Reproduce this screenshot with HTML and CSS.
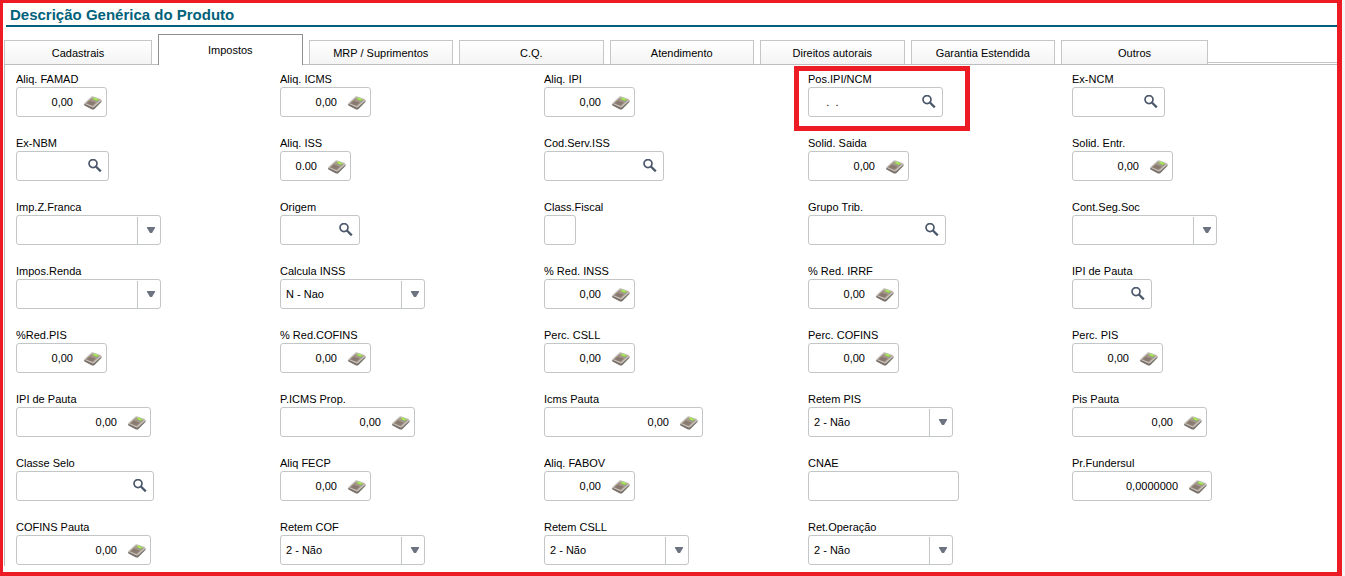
FILE: index.html
```
<!DOCTYPE html>
<html lang="pt-BR">
<head>
    <meta charset="UTF-8">
    <meta name="viewport" content="width=device-width, initial-scale=1.0">
    <title>Descrição Genérica do Produto</title>
    <link rel="stylesheet" href="styles.css">
</head>
<body>
    <main class="frame">
        <h1>Descrição Genérica do Produto</h1>

        <div class="tabbar">
            <nav class="tabs">
                <button class="tab first">Cadastrais</button>
                <button class="tab active">Impostos</button>
                <button class="tab">MRP / Suprimentos</button>
                <button class="tab">C.Q.</button>
                <button class="tab">Atendimento</button>
                <button class="tab">Direitos autorais</button>
                <button class="tab">Garantia Estendida</button>
                <button class="tab last">Outros</button>
            </nav>
            <div class="tabs-rest"></div>
        </div>

        <form class="panel" id="fields"></form>
    </main>

    <svg width="0" height="0" class="defs">
        <symbol id="calc" viewBox="0 0 18 14">
            <path d="M0 7.4 L0.4 9.4 L8 13.6 L10 13.4 L17.4 6 L17.8 4.2 L9.4 9.4 Z" fill="#77706a"/>
            <path d="M0 7.4 L7.4 0.6 L9 0.2 L17 3 L17.8 4.2 L10 11.2 L8.4 11.4 Z" fill="#cac4be"/>
            <path d="M1.4 7.2 L6 3.2 L8.4 1.4 L16 4 L8.8 10.4 Z" fill="#a3968b"/>
            <path d="M2.4 7.2 L5.8 4.4 L11.6 6.8 L8.4 9.6 Z" fill="#8a7b70"/>
            <path d="M8.4 3 L10 1.6 L14.8 3.2 L13.2 4.9 Z" fill="#8fdb3f"/>
            <path d="M9.6 2.9 L10.4 2.2 L13.6 3.3 L12.8 4.1 Z" fill="#b6f36e"/>
        </symbol>
        <symbol id="lens" viewBox="0 0 14 14">
            <circle cx="5" cy="4.6" r="4" fill="none" stroke="#4b586b" stroke-width="1.7"/>
            <path d="M7.9 7.5 L12.8 12.4" stroke="#4b586b" stroke-width="2.3"/>
        </symbol>
        <symbol id="down" viewBox="0 0 8 6">
            <path d="M0 0 H8 V1 L5 6 H3 L0 1 Z" fill="#6c7280"/>
        </symbol>
    </svg>

    <script>
        // label, kind, width, value
        const fields = [
            ["Aliq. FAMAD", "calc", 91, "0,00"],
            ["Aliq. ICMS", "calc", 91, "0,00"],
            ["Aliq. IPI", "calc", 91, "0,00"],
            ["Pos.IPI/NCM", "lens", 135, "    .  .", "marked"],
            ["Ex-NCM", "lens", 93, ""],

            ["Ex-NBM", "lens", 93, ""],
            ["Aliq. ISS", "calc", 71, "0.00"],
            ["Cod.Serv.ISS", "lens", 120, ""],
            ["Solid. Saida", "calc", 101, "0,00"],
            ["Solid. Entr.", "calc", 101, "0,00"],

            ["Imp.Z.Franca", "select", 145, ""],
            ["Origem", "lens", 80, ""],
            ["Class.Fiscal", "text", 32, ""],
            ["Grupo Trib.", "lens", 138, ""],
            ["Cont.Seg.Soc", "select", 145, ""],

            ["Impos.Renda", "select", 145, ""],
            ["Calcula INSS", "select", 145, "N - Nao"],
            ["% Red. INSS", "calc", 91, "0,00"],
            ["% Red. IRRF", "calc", 91, "0,00"],
            ["IPI de Pauta", "lens", 80, ""],

            ["%Red.PIS", "calc", 91, "0,00"],
            ["% Red.COFINS", "calc", 91, "0,00"],
            ["Perc. CSLL", "calc", 91, "0,00"],
            ["Perc. COFINS", "calc", 91, "0,00"],
            ["Perc. PIS", "calc", 91, "0,00"],

            ["IPI de Pauta", "calc", 135, "0,00"],
            ["P.ICMS Prop.", "calc", 135, "0,00"],
            ["Icms Pauta", "calc", 159, "0,00"],
            ["Retem PIS", "select", 145, "2 - Não"],
            ["Pis Pauta", "calc", 135, "0,00"],

            ["Classe Selo", "lens", 138, ""],
            ["Aliq FECP", "calc", 91, "0,00"],
            ["Aliq. FABOV", "calc", 91, "0,00"],
            ["CNAE", "text", 151, ""],
            ["Pr.Fundersul", "calc", 140, "0,0000000"],

            ["COFINS Pauta", "calc", 135, "0,00"],
            ["Retem COF", "select", 145, "2 - Não"],
            ["Retem CSLL", "select", 145, "2 - Não"],
            ["Ret.Operação", "select", 145, "2 - Não"]
        ];

        document.getElementById("fields").innerHTML = fields.map(([label, kind, width, value, extra], i) => {
            let control;
            if (kind === "select") {
                control = `<select id="f${i}"><option>${value}</option></select>
                    <span class="arrow"><svg width="8" height="6"><use href="#down"/></svg></span>`;
            } else {
                control = `<input type="text" id="f${i}" value="${value}">`;
                if (kind === "calc") {
                    control += `<button type="button" aria-label="Calculadora"><svg width="18" height="14"><use href="#calc"/></svg></button>`;
                }
                if (kind === "lens") {
                    control += `<button type="button" aria-label="Pesquisar"><svg width="14" height="14"><use href="#lens"/></svg></button>`;
                }
            }
            return `<div class="field ${extra || ""}">
                <label for="f${i}">${label}</label>
                <div class="box ${kind}" style="width: ${width}px">${control}</div>
            </div>`;
        }).join("");
    </script>
</body>
</html>
```
FILE: styles.css
```
*, *::after {
    box-sizing: border-box;
}
body {
    margin: 0;
    padding-right: 3px;
    background-color: #f6f6f6;
    color: #000;
    font-family: "Liberation Sans", Arial, sans-serif;
    font-size: 11px;
}
button, input, select {
    font: inherit;
    color: inherit;
    border: none;
    background: none;
    padding: 0;
    margin: 0;
    outline: none;
}
.defs {
    position: absolute;
}
.frame {
    min-height: 100vh;
    background-color: #fff;
    border: solid #ed1c24;
    border-width: 3px 5px 4px 3px;
}
h1 {
    margin: 0 0 0 3px;
    padding: 3px 0 0 4px;
    height: 24px;
    border-bottom: 2px solid #00617a;
    color: #00617a;
    font-size: 15px;
    line-height: 18px;
}

/* tabs */
.tabbar {
    display: flex;
    align-items: flex-end;
    margin-top: 7px;
    padding-left: 1px;
}
.tabs {
    display: flex;
    align-items: flex-end;
    gap: 6px;
    flex: 0 1 1204px;
}
.tab {
    flex: 1;
    height: 24px;
    border: 1px solid #c6c6c6;
    border-bottom: none;
    background: linear-gradient(#fff, #f4f4f4);
    white-space: nowrap;
}
.tab.first {
    flex: 0 0 148px;
}
.tab.last {
    flex: 0 0 147px;
}
.tab.active {
    height: 31px;
    margin-bottom: -1px;
    border-color: #8f8f8f;
    background: #fff;
    z-index: 1;
}
.tabs-rest {
    flex: 1;
    height: 2px;
    border-top: 1px solid #c6c6c6;
}

/* fields */
.panel {
    display: grid;
    grid-template-columns: repeat(5, 1fr);
    row-gap: 20px;
    margin-left: 1px;
    padding: 8px 1px 1px 11px;
    border: solid #bdbdbd;
    border-width: 1px 0 0 1px;
}
.field {
    position: relative;
}
.field label {
    display: block;
    height: 14px;
    line-height: 13px;
}
.box {
    display: flex;
    align-items: center;
    height: 30px;
    border: 1px solid #c3c6c6;
    border-radius: 3px;
    background-color: #fff;
}
.box input {
    flex: 1;
    min-width: 0;
    height: 28px;
    padding-left: 5px;
}
.calc input {
    text-align: right;
}
.box button {
    display: flex;
    flex: none;
    cursor: pointer;
}
.calc button {
    padding: 2px 4px 0 11px;
}
.lens button {
    padding: 0 6px 0 0;
}
.box.select {
    display: grid;
}
.box select {
    grid-area: 1 / 1;
    width: 100%;
    height: 28px;
    padding-left: 5px;
    appearance: none;
}
.arrow {
    grid-area: 1 / 1;
    justify-self: end;
    align-self: end;
    display: flex;
    align-items: center;
    justify-content: center;
    width: 23px;
    height: 27px;
    padding: 0 0 2px 3px;
    border-left: 1px solid #c3c6c6;
    pointer-events: none;
}

/* red mark around the field */
.marked::after {
    content: "";
    position: absolute;
    top: -7px;
    left: -14px;
    width: 176px;
    height: 65px;
    border: 5px solid #ed1c24;
    pointer-events: none;
}
```
